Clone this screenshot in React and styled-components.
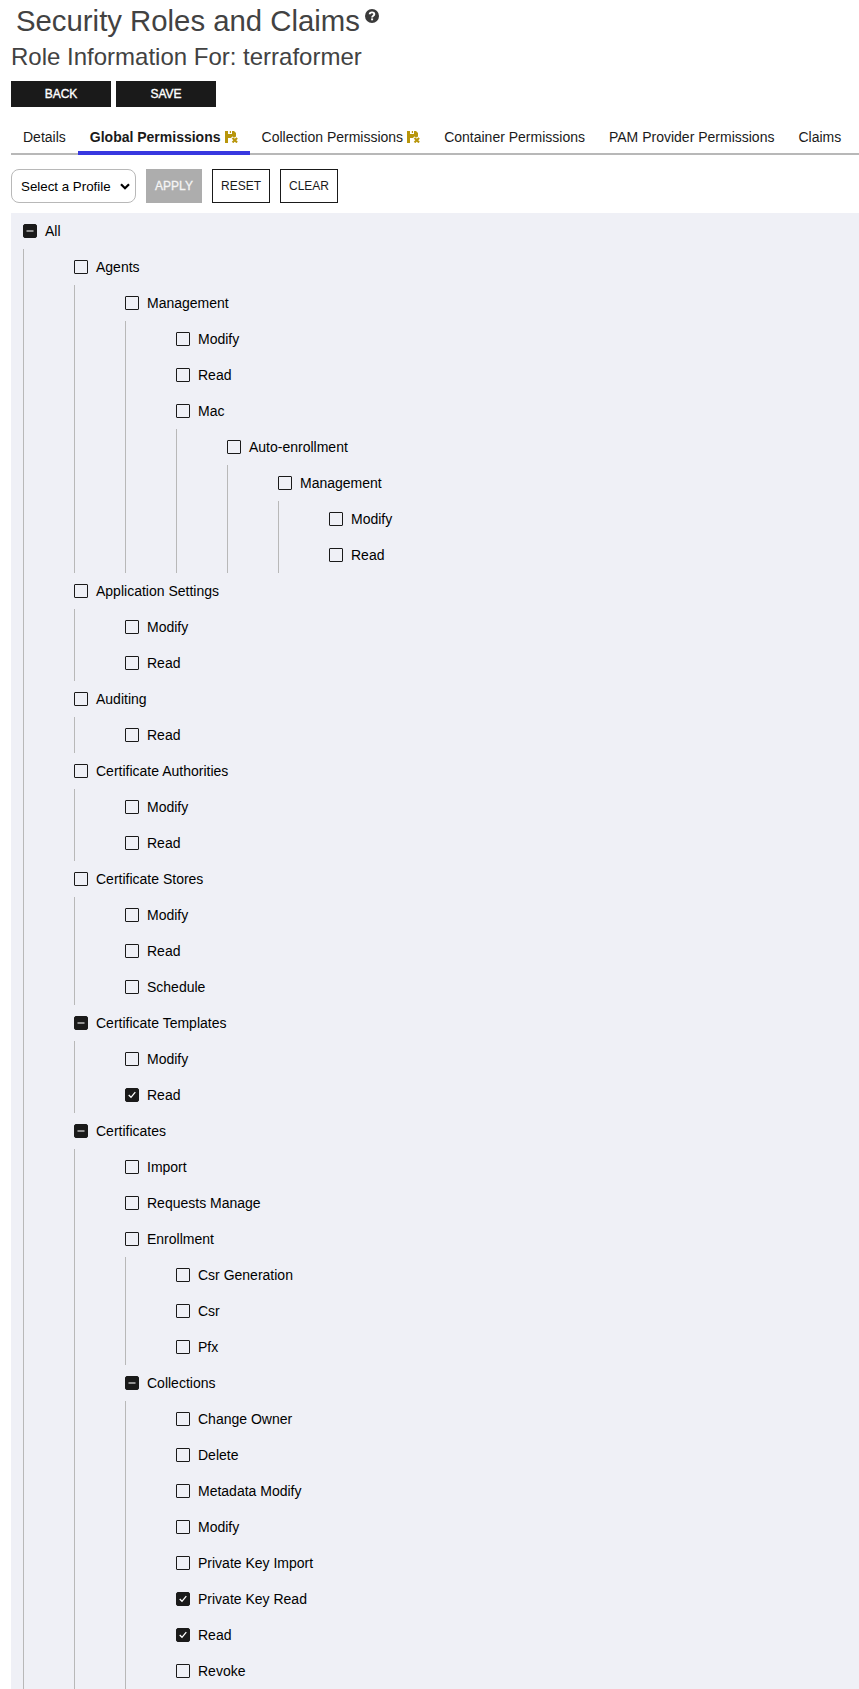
import React from 'react';
import styled, { createGlobalStyle, css } from 'styled-components';

const GlobalStyle = createGlobalStyle`
  * { box-sizing: border-box; }
  body {
    margin: 0;
    background: #fff;
    color: #000;
    font-family: 'Liberation Sans', Arial, sans-serif;
    font-size: 14px;
    overflow-x: hidden;
  }
`;

const Page = styled.main`
  padding-left: 11px;
`;

const Title = styled.h1`
  display: flex;
  align-items: flex-start;
  margin: 0;
  padding: 4px 0 0 5px;
  height: 40px;
  font-size: 29.33px;
  line-height: 33px;
  font-weight: 400;
  color: #424242;
  white-space: nowrap;
`;

const HelpIcon = styled.svg`
  width: 14px;
  height: 14px;
  margin: 5px 0 0 5px;
`;

const Subtitle = styled.h2`
  margin: 0;
  height: 41px;
  padding-top: 3px;
  font-size: 24px;
  line-height: 28px;
  font-weight: 400;
  color: #424242;
  white-space: nowrap;
`;

const Actions = styled.div`
  display: flex;
  gap: 5px;
`;

const ActionButton = styled.button`
  width: 100px;
  height: 26px;
  padding: 0 0 1px;
  border: 0;
  background: #1a1a1a;
  color: #fff;
  font: 12px 'Liberation Sans', Arial, sans-serif;
  -webkit-text-stroke: 0.35px #fff;
`;

const Tabs = styled.nav`
  display: flex;
  height: 48px;
  background: linear-gradient(#b8b8b8, #b8b8b8) left bottom / 100% 2px no-repeat;
`;

const Tab = styled.a`
  display: flex;
  align-items: flex-start;
  height: 48px;
  padding: 22px 12px 0;
  line-height: 16px;
  color: #1a1a1a;
  white-space: nowrap;
  ${({ $active }) => $active && css`
    font-weight: 700;
    border-bottom: 4px solid #3838e0;
  `}
`;

const UnsavedIcon = styled.svg`
  width: 13px;
  height: 12px;
  margin: 2px 0 0 4px;
`;

const Toolbar = styled.div`
  display: flex;
  gap: 10px;
  padding: 14px 0 10px;
`;

const ProfileSelect = styled.div`
  display: flex;
  align-items: center;
  justify-content: space-between;
  width: 125px;
  height: 34px;
  padding: 0 5px 0 9px;
  border: 1px solid #b8b8b8;
  border-radius: 8px;
  font-size: 13.33px;
  white-space: nowrap;
`;

const Chevron = styled.svg`
  width: 10px;
  height: 7px;
`;

const ToolButton = styled.button`
  width: ${({ $width }) => $width}px;
  height: 34px;
  padding: 0 0 1px;
  border: 1px solid ${({ disabled }) => (disabled ? '#adadad' : '#1a1a1a')};
  background: ${({ disabled }) => (disabled ? '#adadad' : '#fff')};
  color: ${({ disabled }) => (disabled ? '#f5f5f5' : '#1a1a1a')};
  font: 12px 'Liberation Sans', Arial, sans-serif;
  ${({ disabled }) => disabled && css`-webkit-text-stroke: 0.3px #f5f5f5;`}
`;

const Tree = styled.div`
  padding-left: 12px;
  background: #eff0f6;
`;

const Row = styled.div`
  display: flex;
  align-items: center;
  gap: 8px;
  height: 36px;
  line-height: 16px;
  white-space: nowrap;
`;

const Children = styled.div`
  padding-left: 50px;
  border-left: 1px solid #b8b8b8;
`;

const Box = styled.span`
  display: flex;
  flex: none;
  width: 14px;
  height: 14px;
  border: 1px solid #1a1a1a;
  border-radius: ${({ $state }) => ($state ? 2 : 1)}px;
  background: ${({ $state }) => ($state ? '#1a1a1a' : 'transparent')};
`;

const Mark = styled.svg`
  width: 12px;
  height: 12px;
`;

const n = (label, children, state) => ({ label, children, state });
const ON = 'checked';
const MIXED = 'mixed';

const permissions = n('All', [
  n('Agents', [
    n('Management', [
      n('Modify'),
      n('Read'),
      n('Mac', [n('Auto-enrollment', [n('Management', [n('Modify'), n('Read')])])]),
    ]),
  ]),
  n('Application Settings', [n('Modify'), n('Read')]),
  n('Auditing', [n('Read')]),
  n('Certificate Authorities', [n('Modify'), n('Read')]),
  n('Certificate Stores', [n('Modify'), n('Read'), n('Schedule')]),
  n('Certificate Templates', [n('Modify'), n('Read', null, ON)], MIXED),
  n('Certificates', [
    n('Import'),
    n('Requests Manage'),
    n('Enrollment', [n('Csr Generation'), n('Csr'), n('Pfx')]),
    n('Collections', [
      n('Change Owner'),
      n('Delete'),
      n('Metadata Modify'),
      n('Modify'),
      n('Private Key Import'),
      n('Private Key Read', null, ON),
      n('Read', null, ON),
      n('Revoke'),
    ], MIXED),
  ], MIXED),
], MIXED);

function Node({ node }) {
  return (
    <div>
      <Row>
        <Box $state={node.state}>
          {node.state === ON && (
            <Mark viewBox="0 0 12 12"><path d="M2.700 6 5 8.300 9.300 3.200" fill="none" stroke="#fff" strokeWidth="1.300" /></Mark>
          )}
          {node.state === MIXED && (
            <Mark viewBox="0 0 12 12"><path d="M2.500 5h7v2h-7z" fill="#929292" /></Mark>
          )}
        </Box>
        {node.label}
      </Row>
      {node.children && (
        <Children>
          {node.children.map((c) => <Node key={c.label} node={c} />)}
        </Children>
      )}
    </div>
  );
}

const Unsaved = () => (
  <UnsavedIcon viewBox="0 0 13 12">
    <path fill="#b8960c" fillRule="evenodd" d="M0 0h9l2 2v3.500L9.500 6.500 7.300 5.600 6 7H3v5H0zM3 0v3h4V0H6v2H4.800V0z" />
    <path d="m7.500 7 4.600 4.400m0-4.400-4.600 4.400" stroke="#b8960c" strokeWidth="2.100" />
  </UnsavedIcon>
);

export default function App() {
  return (
    <Page>
      <GlobalStyle />
      <Title>
        Security Roles and Claims
        <HelpIcon viewBox="0 0 14 14">
          <circle cx="7" cy="7" r="7" fill="#3a3a3a" />
          <path d="M4.700 5.200C4.800 2.700 9.300 2.800 9.300 5.200 9.300 6.800 7.100 6.700 7.100 8.500" fill="none" stroke="#fff" strokeWidth="1.900" />
          <path d="M6.100 9.400h2v1.900h-2z" fill="#fff" />
        </HelpIcon>
      </Title>
      <Subtitle>Role Information For: terraformer</Subtitle>
      <Actions>
        <ActionButton>BACK</ActionButton>
        <ActionButton>SAVE</ActionButton>
      </Actions>
      <Tabs>
        <Tab>Details</Tab>
        <Tab $active>Global Permissions<Unsaved /></Tab>
        <Tab>Collection Permissions<Unsaved /></Tab>
        <Tab>Container Permissions</Tab>
        <Tab>PAM Provider Permissions</Tab>
        <Tab>Claims</Tab>
      </Tabs>
      <Toolbar>
        <ProfileSelect>
          Select a Profile
          <Chevron viewBox="0 0 10 7"><path d="m1 1.200 4 4 4-4" fill="none" stroke="#000" strokeWidth="2.200" /></Chevron>
        </ProfileSelect>
        <ToolButton $width={56} disabled>APPLY</ToolButton>
        <ToolButton $width={58}>RESET</ToolButton>
        <ToolButton $width={58}>CLEAR</ToolButton>
      </Toolbar>
      <Tree><Node node={permissions} /></Tree>
    </Page>
  );
}
